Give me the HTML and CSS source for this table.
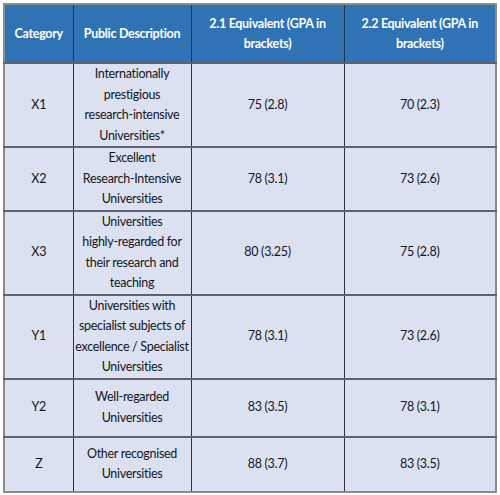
FILE: index.html
```html
<!DOCTYPE html>
<html>
<head>
    <meta charset="utf-8">
    <title>Category Equivalents</title>
    <link rel="stylesheet" href="styles.css">
</head>
<body>
    <table class="grades">
        <colgroup>
            <col class="col-cat">
            <col class="col-desc">
            <col class="col-21">
            <col class="col-22">
        </colgroup>
        <thead>
            <tr class="head">
                <th>Category</th>
                <th>Public Description</th>
                <th>2.1 Equivalent (GPA in<br>brackets)</th>
                <th>2.2 Equivalent (GPA in<br>brackets)</th>
            </tr>
        </thead>
        <tbody>
            <tr class="r-x1">
                <td>X1</td>
                <td>Internationally<br>prestigious<br>research-intensive<br>Universities*</td>
                <td>75 (2.8)</td>
                <td>70 (2.3)</td>
            </tr>
            <tr class="r-x2">
                <td>X2</td>
                <td>Excellent<br>Research-Intensive<br>Universities</td>
                <td>78 (3.1)</td>
                <td>73 (2.6)</td>
            </tr>
            <tr class="r-x3">
                <td>X3</td>
                <td>Universities<br>highly-regarded for<br>their research and<br>teaching</td>
                <td>80 (3.25)</td>
                <td>75 (2.8)</td>
            </tr>
            <tr class="r-y1">
                <td>Y1</td>
                <td>Universities with<br>specialist subjects of<br>excellence / Specialist<br>Universities</td>
                <td>78 (3.1)</td>
                <td>73 (2.6)</td>
            </tr>
            <tr class="r-y2">
                <td>Y2</td>
                <td>Well-regarded<br>Universities</td>
                <td>83 (3.5)</td>
                <td>78 (3.1)</td>
            </tr>
            <tr class="r-z">
                <td>Z</td>
                <td>Other recognised<br>Universities</td>
                <td>88 (3.7)</td>
                <td>83 (3.5)</td>
            </tr>
        </tbody>
    </table>
</body>
</html>
```

FILE: styles.css
```css
html,
body {
    background: #fff;
    margin: 0;
}

body {
    padding: 3px 0 0 3px;
    font-family: Lato, "Open Sans", sans-serif;
    font-size: 12.5px;
    letter-spacing: -0.3px;
    color: #14161e;
}

.grades {
    border-collapse: collapse;
    table-layout: fixed;
    width: 492px;
    border: 2px solid #878d88;
}

.col-cat { width: 69px; }
.col-desc { width: 118px; }
.col-21 { width: 153px; }
.col-22 { width: 152px; }

th,
td {
    border: 1px solid #2c303c;
    text-align: center;
    vertical-align: middle;
    padding: 0;
    line-height: 20.5px;
    white-space: nowrap;
}

td {
    background: #dbe1f0;
    border-top: 2px solid #5c6270;
}

th {
    background: #2f73b5;
    color: #fff;
    font-size: 12.5px;
    font-weight: bold;
    line-height: 20px;
    border-color: #1f3452;
}

.head { height: 59px; }
.r-x1 { height: 83px; }
.r-x2 { height: 61px; }
.r-x3 { height: 82px; }
.r-y1 { height: 82px; }
.r-y2 { height: 58px; }
.r-z { height: 55px; }
```
